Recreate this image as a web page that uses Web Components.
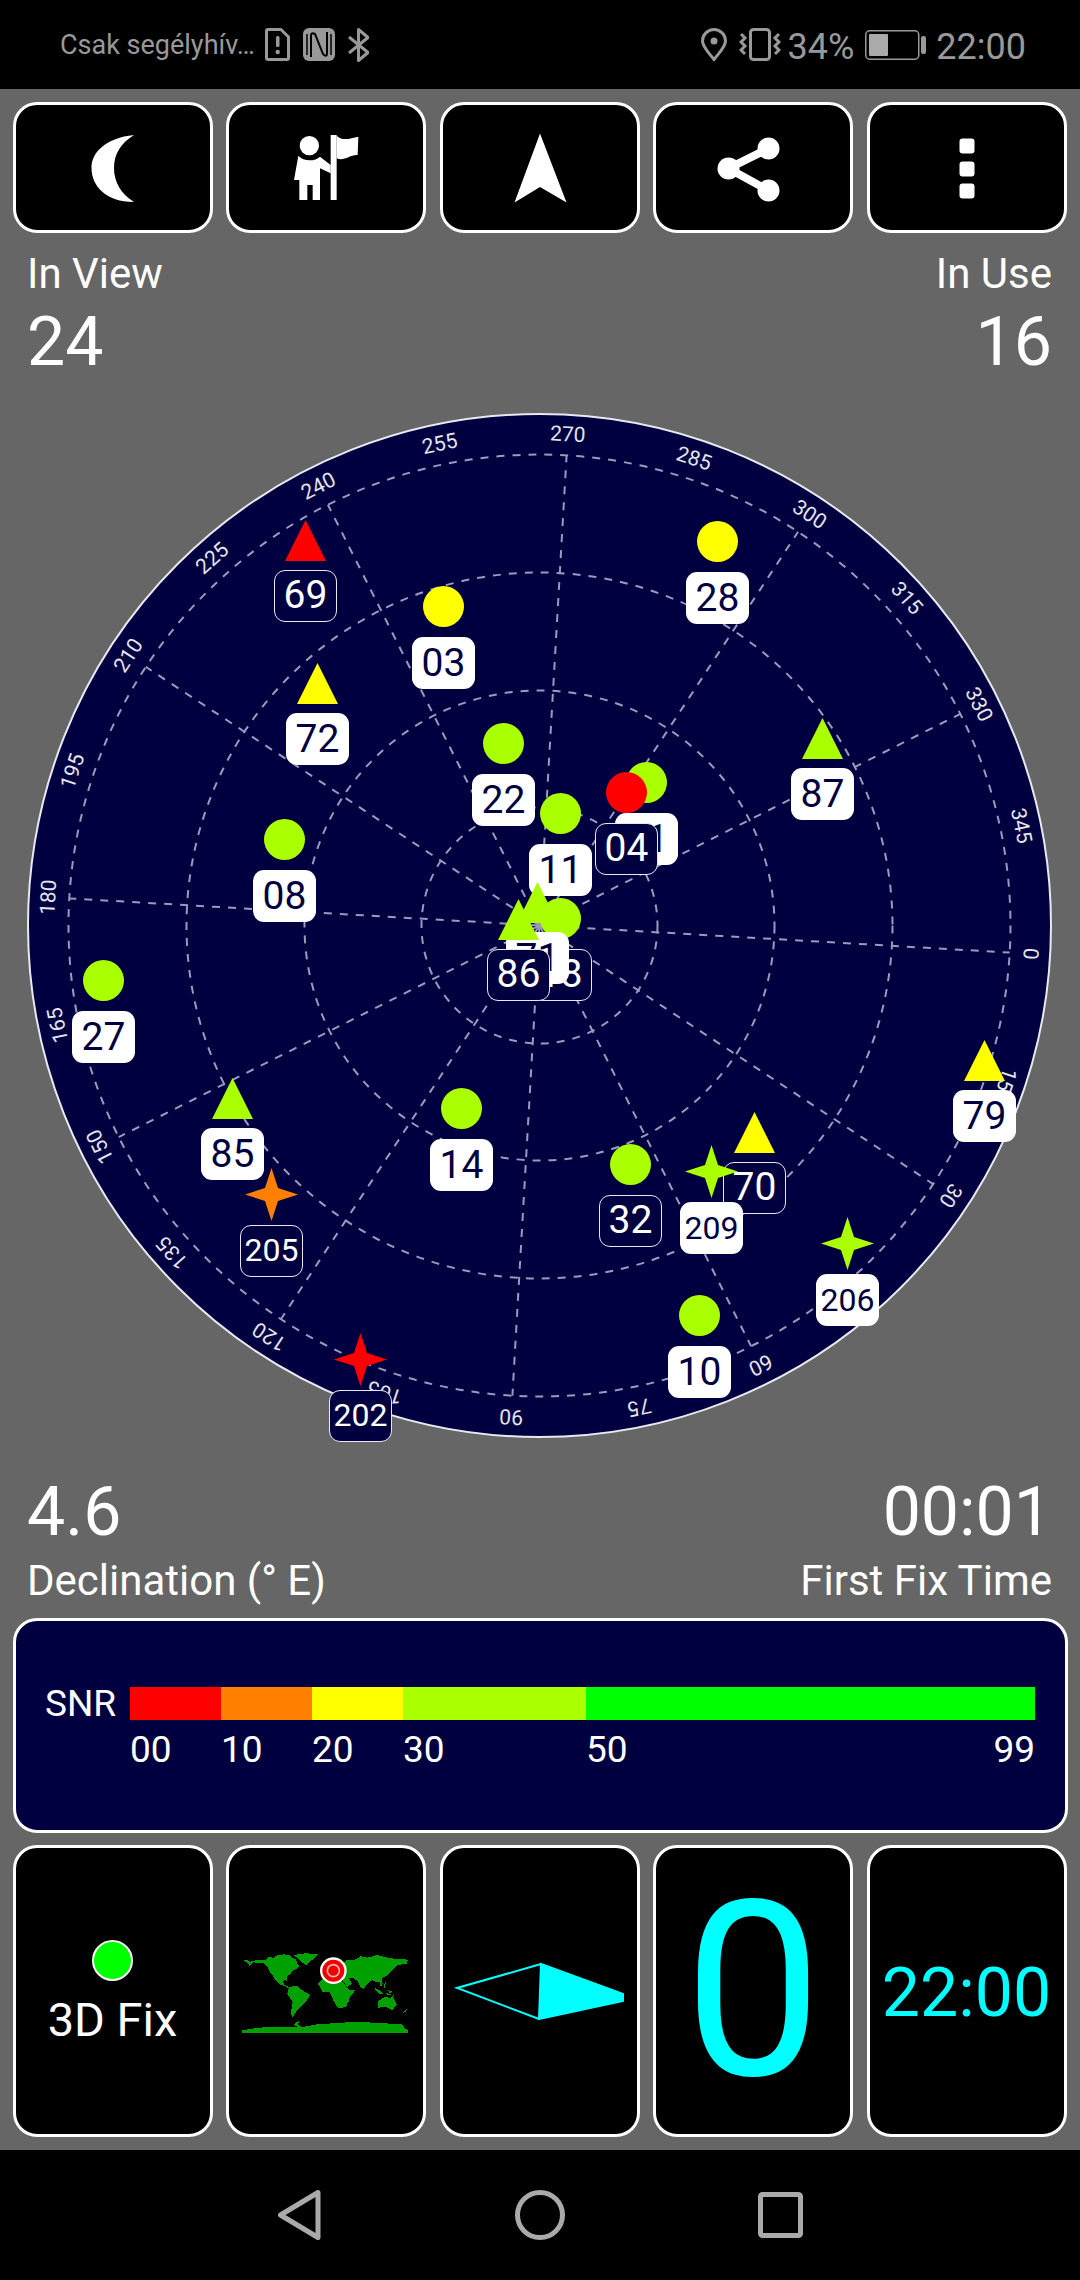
<!DOCTYPE html>
<html>
<head>
<meta charset="utf-8">
<title>GPS Test</title>
<style>
  html, body { margin: 0; padding: 0; background: #666; }
  body { width: 1080px; height: 2280px; font-family: Roboto, "Liberation Sans", sans-serif; color: #fff; overflow: hidden; }
  gps-app { width: 1080px; height: 2280px; }
</style>
</head>
<body>
<gps-app>
  <status-bar slot="status"></status-bar>

  <tile-row slot="top" height="131">
    <app-tile>
      <svg width="80" height="80" viewBox="0 0 80 80"><path fill="#fff" d="M61 7C33 10 18.500 24 18.500 40C18.500 58 33 74 61 74C48 66 41 54 41 40C41 26 48 15 61 7Z"/></svg>
    </app-tile>
    <app-tile>
      <svg width="110" height="85" viewBox="3 0 330 255"><g fill="#fff"><circle cx="118" cy="62" r="29"/><rect x="182" y="30" width="18" height="195"/><path d="M200 32C220 50 240 40 265 35L263 90C240 88 222 110 200 100Z"/><path d="M85 92C100 110 135 110 150 95L182 120V145L150 130V225H128V180H112V225H88V165H72Z"/></g></svg>
    </app-tile>
    <app-tile>
      <svg width="80" height="80" viewBox="0 0 80 80"><path fill="#fff" d="M40 5.500L66.500 74.500L40 59L14.500 74.500Z"/></svg>
    </app-tile>
    <app-tile>
      <svg width="80" height="80" viewBox="0 0 80 80"><path fill="none" stroke="#fff" stroke-width="8" d="M55.500 20.500L15.500 40.500L55.500 62.500"/><circle fill="#fff" cx="15.500" cy="40.500" r="11"/><circle fill="#fff" cx="55.500" cy="20.500" r="11"/><circle fill="#fff" cx="55.500" cy="62.500" r="11"/></svg>
    </app-tile>
    <app-tile>
      <svg width="80" height="80" viewBox="0 0 80 80"><g fill="#fff"><rect x="32.500" y="10.500" width="15" height="15" rx="3"/><rect x="32.500" y="33.500" width="15" height="15" rx="3"/><rect x="32.500" y="55.500" width="15" height="15" rx="3"/></g></svg>
    </app-tile>
  </tile-row>

  <stat-row slot="stats-top">
    <stat-block label="In View" value="24"></stat-block>
    <stat-block label="In Use" value="16" right></stat-block>
  </stat-row>

  <sky-plot slot="plot">
    <sat-marker px="306" py="520" shape="tri" color="#ff0000" outline>69</sat-marker>
    <sat-marker px="444" py="586" shape="dot" color="#ffff00">03</sat-marker>
    <sat-marker px="318" py="663" shape="tri" color="#ffff00">72</sat-marker>
    <sat-marker px="504" py="723" shape="dot" color="#aaff00">22</sat-marker>
    <sat-marker px="285" py="819" shape="dot" color="#aaff00">08</sat-marker>
    <sat-marker px="718" py="521" shape="dot" color="#ffff00">28</sat-marker>
    <sat-marker px="823" py="718" shape="tri" color="#aaff00">87</sat-marker>
    <sat-marker px="647" py="762" shape="dot" color="#aaff00">21</sat-marker>
    <sat-marker px="627" py="772" shape="dot" color="#ff0000" outline>04</sat-marker>
    <sat-marker px="561" py="793" shape="dot" color="#aaff00">11</sat-marker>
    <sat-marker px="561" py="898" shape="dot" color="#aaff00" outline>18</sat-marker>
    <sat-marker px="538" py="882" shape="tri" color="#aaff00">71</sat-marker>
    <sat-marker px="519" py="899" shape="tri" color="#aaff00" outline>86</sat-marker>
    <sat-marker px="104" py="960" shape="dot" color="#aaff00">27</sat-marker>
    <sat-marker px="233" py="1078" shape="tri" color="#aaff00">85</sat-marker>
    <sat-marker px="272" py="1168" shape="star" color="#ff8000" outline>205</sat-marker>
    <sat-marker px="462" py="1088" shape="dot" color="#aaff00">14</sat-marker>
    <sat-marker px="361" py="1333" shape="star" color="#ff0000" outline>202</sat-marker>
    <sat-marker px="985" py="1040" shape="tri" color="#ffff00">79</sat-marker>
    <sat-marker px="755" py="1112" shape="tri" color="#ffff00" outline>70</sat-marker>
    <sat-marker px="631" py="1144" shape="dot" color="#aaff00" outline>32</sat-marker>
    <sat-marker px="712" py="1145" shape="star" color="#aaff00">209</sat-marker>
    <sat-marker px="848" py="1217" shape="star" color="#aaff00">206</sat-marker>
    <sat-marker px="700" py="1295" shape="dot" color="#aaff00">10</sat-marker>
  </sky-plot>

  <stat-row slot="stats-bottom">
    <stat-block label="Declination (° E)" value="4.6" value-first></stat-block>
    <stat-block label="First Fix Time" value="00:01" value-first right></stat-block>
  </stat-row>

  <snr-legend slot="snr"></snr-legend>

  <tile-row slot="bottom" height="292">
    <app-tile>
      <fix-status label="3D Fix"></fix-status>
    </app-tile>
    <app-tile>
      <svg width="185" height="95" viewBox="0 0 555 285" style="margin:3px 0 0 1px">
        <g fill="#00a000" shape-rendering="crispEdges">
          <path d="M25 44L40 46L48 50L72 44L96 44L104 36L118 38L126 32L150 28L166 30L176 40L186 42L190 56L196 64L186 72L176 76L170 86L160 94L160 110L152 104L146 110L152 120L164 126L168 132L150 122L136 118L124 106L116 92L108 82L100 64L88 54L56 52L46 64L42 54Z"/>
          <path d="M178 30L214 25L254 27L242 40L228 48L216 60L204 52L194 42Z"/>
          <path d="M165 126L190 122L205 136L228 150L218 168L202 184L190 194L176 216L170 206L176 172L160 146Z"/>
          <path d="M300 66L320 60L340 44L362 44L380 34L400 38L430 30L470 40L500 42L522 44L518 56L492 60L480 70L472 80L462 90L444 100L446 118L436 110L428 112L416 106L404 112L388 132L378 124L370 108L358 100L346 100L354 116L340 126L326 106L300 100Z"/>
          <path d="M252 116L262 104L280 98L320 106L335 122L346 136L366 134L348 156L336 186L312 190L298 166L288 142L266 142Z"/>
          <path d="M432 170L445 160L455 155L470 160L476 154L488 178L475 196L455 186L432 188Z"/>
          <path d="M420 128L436 136L448 148L434 146ZM452 142L482 152L462 150ZM440 112L446 124L438 124ZM458 104L452 128L448 126ZM338 166L346 158L342 178ZM506 204L518 192L516 200ZM462 136L474 140L468 146Z"/>
          <path d="M25 256L60 250L100 246L190 246L178 238L196 226L192 240L206 246L250 238L340 232L400 232L505 238L512 250L522 256V264H25Z"/>
        </g>
        <circle cx="298" cy="77" r="40" fill="#fff"/>
        <circle cx="298" cy="77" r="33" fill="#f00000"/>
        <circle cx="298" cy="77" r="18" fill="none" stroke="#ffb0b0" stroke-width="5"/>
      </svg>
    </app-tile>
    <app-tile>
      <svg width="180" height="73" viewBox="450 1955 180 73">
        <path fill="none" stroke="#00ffff" stroke-width="2" d="M541 1964L457 1988L539 2019"/>
        <path fill="#00ffff" stroke="#00ffff" stroke-width="2" d="M541 1964L623 1994V2001L539 2019Z"/>
      </svg>
    </app-tile>
    <app-tile><big-readout size="245">0</big-readout></app-tile>
    <app-tile><big-readout size="68" style="padding-top:3px">22:00</big-readout></app-tile>
  </tile-row>

  <nav-bar slot="nav"></nav-bar>
</gps-app>

<script>
// ==================================================
// APP LAYOUT
// ==================================================
class GpsApp extends HTMLElement {
  constructor() {
    super();
    this.attachShadow({ mode: "open" });
    this.shadowRoot.innerHTML = `
      <style>
        :host { display: flex; flex-direction: column; background: #666; }
        .top { display: block; margin-top: 13px; }
        .stats-top { display: block; margin-top: 16px; }
        .plot { display: block; margin: 31px 0 0 27px; }
        .stats-bottom { display: block; margin-top: 34px; }
        .snr { display: block; margin-top: 13px; }
        .bottom { display: block; margin-top: 12px; }
        .nav { display: block; margin-top: 13px; }
      </style>
      <slot name="status"></slot>
      <div class="top"><slot name="top"></slot></div>
      <div class="stats-top"><slot name="stats-top"></slot></div>
      <div class="plot"><slot name="plot"></slot></div>
      <div class="stats-bottom"><slot name="stats-bottom"></slot></div>
      <div class="snr"><slot name="snr"></slot></div>
      <div class="bottom"><slot name="bottom"></slot></div>
      <div class="nav"><slot name="nav"></slot></div>
    `;
  }
}
customElements.define("gps-app", GpsApp);

// ==================================================
// STATUS BAR
// ==================================================
class StatusBar extends HTMLElement {
  constructor() {
    super();
    this.attachShadow({ mode: "open" });
    this.shadowRoot.innerHTML = `
      <style>
        :host { display: flex; align-items: center; justify-content: space-between; height: 90px; background: #000; color: #999; padding: 0 54px 0 60px; box-sizing: border-box; font-family: Roboto, sans-serif; }
        .group { display: flex; align-items: center; }
        .carrier { font-size: 27px; width: 205px; white-space: nowrap; }
        .big { font-size: 36px; margin-top: 4px; }
        svg { display: block; }
      </style>
      <div class="group">
        <span class="carrier">Csak segélyhív…</span>
        <svg width="25" height="33" viewBox="0 0 25 33"><path fill="none" stroke="#999" stroke-width="3" stroke-linejoin="round" d="M3 1.500H16L23.500 9V30Q23.500 31.500 22 31.500H3Q1.500 31.500 1.500 30V3Q1.500 1.500 3 1.500Z"/><rect x="11" y="8" width="3.500" height="11" rx="1.500" fill="#999"/><circle cx="12.700" cy="24" r="2.200" fill="#999"/></svg>
        <svg style="margin-left:13px" width="32" height="33" viewBox="0 0 32 33"><rect width="32" height="33" rx="6" fill="#999"/><path fill="none" stroke="#000" stroke-width="2" d="M8 29V8Q8 4 12 6L20 26Q24 30 24 25V4"/><path fill="none" stroke="#000" stroke-width="1.500" d="M4 6V27M28 6V27"/></svg>
        <svg style="margin-left:13px" width="21" height="34" viewBox="0 0 21 34"><path fill="none" stroke="#999" stroke-width="3" stroke-linejoin="round" d="M1 9L20 24.500L10.500 32.500V1.500L20 9.500L1 25"/></svg>
      </div>
      <div class="group">
        <svg width="26" height="33" viewBox="0 0 26 33"><path fill="none" stroke="#999" stroke-width="3" d="M13 31.500C8 25 1.500 19 1.500 13A11.500 11.500 0 0 1 24.500 13C24.500 19 18 25 13 31.500Z"/><circle cx="13" cy="13" r="3.500" fill="#999"/></svg>
        <svg style="margin-left:12px" width="42" height="33" viewBox="0 0 42 33"><rect x="11.500" y="1.500" width="19" height="30" rx="3" fill="none" stroke="#999" stroke-width="3"/><path fill="none" stroke="#999" stroke-width="3" d="M2 6L6 10L2 14L6 18L2 22L6 26M40 6L36 10L40 14L36 18L40 22L36 26"/></svg>
        <span class="big" style="margin-left:7px">34%</span>
        <svg style="margin-left:11px" width="61" height="30" viewBox="0 0 61 30"><rect x="0.750" y="0.750" width="53" height="28.500" rx="4" fill="none" stroke="#999" stroke-width="1.500"/><rect x="4" y="4" width="19" height="22" rx="1" fill="#aaa"/><rect x="56" y="6" width="5" height="18" rx="2" fill="#999"/></svg>
        <span class="big" style="margin-left:10px">22:00</span>
      </div>
    `;
  }
}
customElements.define("status-bar", StatusBar);

// ==================================================
// TILES
// ==================================================
class TileRow extends HTMLElement {
  constructor() {
    super();
    this.attachShadow({ mode: "open" });
    this.shadowRoot.innerHTML = `
      <style>
        :host { display: grid; grid-template-columns: repeat(5, 200px); column-gap: 13.500px; padding: 0 12.500px; }
      </style>
      <slot></slot>
    `;
  }
  connectedCallback() {
    this.style.gridAutoRows = this.getAttribute("height") + "px";
  }
}
customElements.define("tile-row", TileRow);

class AppTile extends HTMLElement {
  constructor() {
    super();
    this.attachShadow({ mode: "open" });
    this.shadowRoot.innerHTML = `
      <style>
        :host { display: flex; align-items: center; justify-content: center; box-sizing: border-box; background: #000; border: 3px solid #fff; border-radius: 24px; overflow: hidden; }
      </style>
      <slot></slot>
    `;
  }
}
customElements.define("app-tile", AppTile);

class FixStatus extends HTMLElement {
  constructor() {
    super();
    this.attachShadow({ mode: "open" });
    this.shadowRoot.innerHTML = `
      <style>
        :host { display: flex; flex-direction: column; align-items: center; gap: 12px; padding-top: 5px; }
        .dot { width: 37px; height: 37px; border-radius: 50%; background: #00ff00; border: 2px solid #fff; }
        .txt { font: 47px/54px Roboto, sans-serif; color: #fff; white-space: nowrap; }
      </style>
      <div class="dot"></div>
      <div class="txt"></div>
    `;
  }
  connectedCallback() {
    this.shadowRoot.querySelector(".txt").textContent = this.getAttribute("label");
  }
}
customElements.define("fix-status", FixStatus);

class BigReadout extends HTMLElement {
  constructor() {
    super();
    this.attachShadow({ mode: "open" });
    this.shadowRoot.innerHTML = `
      <style>
        :host { display: block; color: #00ffff; font-family: Roboto, sans-serif; line-height: 1; white-space: nowrap; }
      </style>
      <slot></slot>
    `;
  }
  connectedCallback() {
    this.style.fontSize = this.getAttribute("size") + "px";
  }
}
customElements.define("big-readout", BigReadout);

// ==================================================
// STATS
// ==================================================
class StatRow extends HTMLElement {
  constructor() {
    super();
    this.attachShadow({ mode: "open" });
    this.shadowRoot.innerHTML = `
      <style>
        :host { display: flex; justify-content: space-between; padding: 0 28px 0 27px; }
      </style>
      <slot></slot>
    `;
  }
}
customElements.define("stat-row", StatRow);

class StatBlock extends HTMLElement {
  constructor() {
    super();
    this.attachShadow({ mode: "open" });
    this.shadowRoot.innerHTML = `
      <style>
        :host { display: flex; flex-direction: column; gap: 4px; font-family: Roboto, sans-serif; color: #fff; }
        :host([right]) { text-align: right; }
        :host([value-first]) .val { order: -1; }
        .lab { font-size: 42px; line-height: 49px; white-space: nowrap; }
        .val { font-size: 68px; line-height: 80px; white-space: nowrap; }
      </style>
      <div class="lab"></div>
      <div class="val"></div>
    `;
  }
  connectedCallback() {
    this.shadowRoot.querySelector(".lab").textContent = this.getAttribute("label");
    this.shadowRoot.querySelector(".val").textContent = this.getAttribute("value");
  }
}
customElements.define("stat-block", StatBlock);

// ==================================================
// SKY PLOT
// ==================================================
const PLOT_LEFT = 27;
const PLOT_TOP = 413;
const TILT = 3.3;

class SkyPlot extends HTMLElement {
  constructor() {
    super();
    this.attachShadow({ mode: "open" });
    const c = 512.5;
    const grid = "#9a9abc";
    let lines = "";
    [118, 235, 353, 471].forEach(r => {
      lines += `<circle cx="${c}" cy="${c}" r="${r}" fill="none" stroke="${grid}" stroke-width="2" stroke-dasharray="8 8"/>`;
    });
    let labels = "";
    for (let deg = 0; deg < 360; deg += 15) {
      const a = (deg + TILT) * Math.PI / 180;
      if (deg % 30 === 0) {
        const x = (c + 471 * Math.cos(a)).toFixed(1);
        const y = (c + 471 * Math.sin(a)).toFixed(1);
        lines += `<line x1="${c}" y1="${c}" x2="${x}" y2="${y}" stroke="${grid}" stroke-width="2" stroke-dasharray="8 8"/>`;
      }
      const lx = (c + 492 * Math.cos(a)).toFixed(1);
      const ly = (c + 492 * Math.sin(a)).toFixed(1);
      labels += `<text x="${lx}" y="${ly}" transform="rotate(${deg + 90 + TILT} ${lx} ${ly})" text-anchor="middle" dominant-baseline="central" font-family="Roboto, sans-serif" font-size="21" fill="#e4e4ee">${deg}</text>`;
    }
    this.shadowRoot.innerHTML = `
      <style>
        :host { display: block; position: relative; width: 1025px; height: 1025px; }
        svg { display: block; }
      </style>
      <svg width="1025" height="1025" viewBox="0 0 1025 1025">
        <circle cx="${c}" cy="${c}" r="511.5" fill="#000040" stroke="#e8e8f0" stroke-width="2"/>
        ${lines}
        ${labels}
      </svg>
      <slot></slot>
    `;
  }
}
customElements.define("sky-plot", SkyPlot);

class SatMarker extends HTMLElement {
  constructor() {
    super();
    this.attachShadow({ mode: "open" });
    this.shadowRoot.innerHTML = `
      <style>
        :host { position: absolute; display: flex; flex-direction: column; align-items: center; width: 63px; }
        svg { display: block; flex: none; }
        .tag { box-sizing: border-box; width: 63px; height: 52px; border-radius: 11px; background: #fff; color: #000040; text-align: center; font: 39px/52px Roboto, sans-serif; }
        :host([outline]) .tag { background: #000040; color: #fff; border: 1.500px solid #e8e8f0; line-height: 49px; }
      </style>
      <div class="mark"></div>
      <div class="tag"><slot></slot></div>
    `;
  }
  connectedCallback() {
    const shape = this.getAttribute("shape");
    const color = this.getAttribute("color");
    this.style.left = (this.getAttribute("px") - PLOT_LEFT - 32) + "px";
    this.style.top = (this.getAttribute("py") - PLOT_TOP) + "px";
    const mark = this.shadowRoot.querySelector(".mark");
    const tag = this.shadowRoot.querySelector(".tag");
    if (shape === "tri") {
      mark.innerHTML = `<svg width="41" height="41" viewBox="0 0 41 41"><path fill="${color}" d="M20.500 0L41 41H0Z"/></svg>`;
      tag.style.marginTop = "9px";
    } else if (shape === "dot") {
      mark.innerHTML = `<svg width="41" height="41" viewBox="0 0 41 41"><circle fill="${color}" cx="20.500" cy="20.500" r="20.500"/></svg>`;
      tag.style.marginTop = "10px";
    } else {
      mark.innerHTML = `<svg width="53" height="53" viewBox="0 0 53 53"><path fill="${color}" d="M26.500 0L33 20L53 26.500L33 33L26.500 53L20 33L0 26.500L20 20Z"/></svg>`;
      tag.style.marginTop = "4px";
      tag.style.fontSize = "32px";
    }
  }
}
customElements.define("sat-marker", SatMarker);

// ==================================================
// SNR LEGEND
// ==================================================
class SnrLegend extends HTMLElement {
  constructor() {
    super();
    this.attachShadow({ mode: "open" });
    this.shadowRoot.innerHTML = `
      <style>
        :host { display: block; box-sizing: border-box; width: 1055px; height: 215px; margin: 0 12.500px; padding: 66px 0 0 29.500px; background: #000040; border: 3px solid #fff; border-radius: 24px; font-family: Roboto, sans-serif; color: #fff; }
        .grid { display: grid; grid-template-columns: 85px 91px 91px 91px 183px 449px; grid-template-rows: 33px auto; row-gap: 9px; font-size: 37px; line-height: 42px; }
        .snr { align-self: center; line-height: 33px; }
        .red { background: #ff0000; } .orange { background: #ff8000; } .yellow { background: #ffff00; } .lime { background: #aaff00; } .green { background: #00ff00; }
        .last { display: flex; justify-content: space-between; }
      </style>
      <div class="grid">
        <div class="snr">SNR</div>
        <div class="red"></div><div class="orange"></div><div class="yellow"></div><div class="lime"></div><div class="green"></div>
        <div></div>
        <div>00</div><div>10</div><div>20</div><div>30</div>
        <div class="last"><span>50</span><span>99</span></div>
      </div>
    `;
  }
}
customElements.define("snr-legend", SnrLegend);

// ==================================================
// NAVIGATION BAR
// ==================================================
class NavBar extends HTMLElement {
  constructor() {
    super();
    this.attachShadow({ mode: "open" });
    this.shadowRoot.innerHTML = `
      <style>
        :host { display: flex; align-items: center; height: 130px; background: #000; padding: 0 0 0 278px; box-sizing: border-box; }
        svg { display: block; }
      </style>
      <svg width="43" height="50" viewBox="0 0 43 50"><path fill="none" stroke="#aaa" stroke-width="5" stroke-linejoin="round" d="M40 2.500V47.500L2.500 25Z"/></svg>
      <svg style="margin-left:194px" width="50" height="50" viewBox="0 0 50 50"><circle cx="25" cy="25" r="22.500" fill="none" stroke="#aaa" stroke-width="5"/></svg>
      <svg style="margin-left:193px" width="45" height="46" viewBox="0 0 45 46"><rect x="2.500" y="2.500" width="40" height="41" rx="2" fill="none" stroke="#aaa" stroke-width="5"/></svg>
    `;
  }
}
customElements.define("nav-bar", NavBar);
</script>
</body>
</html>
